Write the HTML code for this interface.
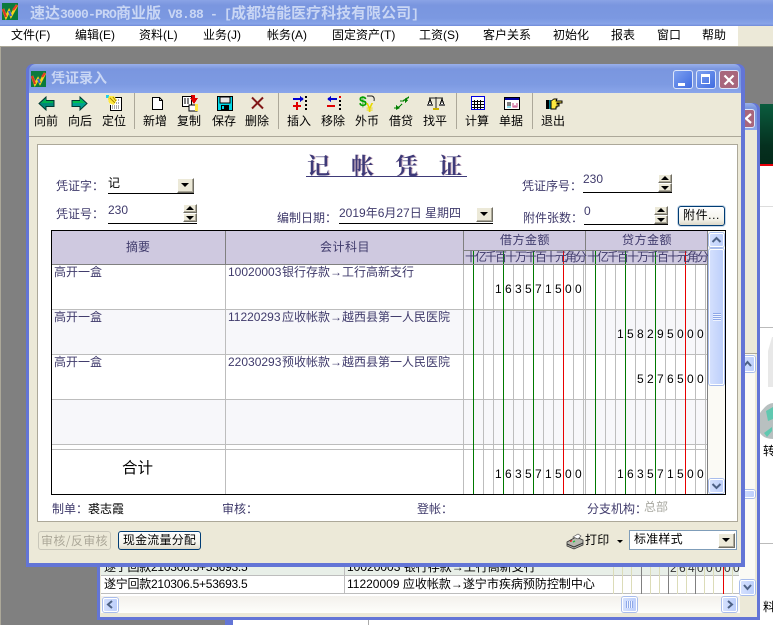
<!DOCTYPE html>
<html><head><meta charset="utf-8"><title>速达3000-PRO商业版</title>
<style>
html,body{margin:0;padding:0;width:773px;height:625px;overflow:hidden;background:#808080}
body{position:relative;font:12px/14px "WenQuanYi Zen Hei","Noto Sans CJK SC","Liberation Sans",sans-serif;color:#000}
.a,.t,.l,svg{position:absolute}
.t,.l{white-space:nowrap;font:12px/14px "Liberation Sans","WenQuanYi Zen Hei","Noto Sans CJK SC",sans-serif}
.l{color:#3f3a6b}
.tb{color:#000;width:40px;text-align:center;top:114px}
.n{font:12px/14px "Liberation Sans",sans-serif;letter-spacing:3.33px;color:#000;position:absolute;white-space:nowrap}
.u{position:absolute;height:1px;background:#000}
.b{position:absolute;background:#ece9d8;border:1px solid;border-color:#fff #716f64 #716f64 #fff;box-shadow:inset -1px -1px 0 #aca899;box-sizing:border-box}
.b i{position:absolute;width:0;height:0;border-left:4px solid transparent;border-right:4px solid transparent}
.d{border-top:4px solid #000}
.up{border-bottom:4px solid #000}
.sb{position:absolute;background:linear-gradient(90deg,#d4e0fd,#bdcffc);border:1px solid #fff;box-shadow:0 0 0 1px #a9bdec;box-sizing:border-box;border-radius:2px}
.tbtn{position:absolute;top:70px;width:20px;height:19px;box-sizing:border-box;border:1px solid #dde6fa;border-radius:3px;background:linear-gradient(135deg,#7da0f0,#3f6be0)}
.xb{position:absolute;box-sizing:border-box;border:1px solid #003c74;border-radius:3px;background:linear-gradient(#fff,#f3f2ea 70%,#dcd8c8);text-align:center;font:12px/17px "Liberation Sans","WenQuanYi Zen Hei",sans-serif}
.m{font:13px/17px "Liberation Mono",monospace;letter-spacing:-.8px;font-weight:bold}
</style></head>
<body>

<!-- far right background -->
<div class="a" style="left:760px;top:104px;width:13px;height:60px;background:linear-gradient(#0a5c3e,#05301f 70%,#042a1a)"></div>
<div class="a" style="left:760px;top:164px;width:13px;height:2px;background:#e8000a"></div>
<div class="a" style="left:760px;top:166px;width:13px;height:459px;background:#fff"></div>
<div class="a" style="left:760px;top:206px;width:13px;height:1px;background:#ddd"></div>
<div class="a" style="left:760px;top:327px;width:13px;height:1px;background:#bbb"></div>
<div class="a" style="left:760px;top:543px;width:13px;height:1px;background:#bbb"></div>
<svg style="left:760px;top:335px" width="13" height="110" viewBox="0 0 13 110"><path d="M8 16L12 2L13 2V52H8z" fill="#e8e8e8"/><path d="M0 78Q7 68 13 68V104Q4 104 0 98z" fill="#b8c0c0"/><path d="M6 76L13 72V84L8 86zM4 98L12 92V96L7 102z" fill="#60c8b0"/></svg>
<div class="t" style="left:763px;top:444px;">转</div>
<div class="t" style="left:763px;top:600px;">料</div>

<!-- bottom window behind -->
<div class="a" style="left:225px;top:617px;width:8px;height:8px;background:#6375d6"></div>
<div class="a" style="left:233px;top:617px;width:540px;height:8px;background:#fff"></div>
<div class="a" style="left:368px;top:617px;width:1px;height:8px;background:#aaa"></div>

<!-- second window -->
<div class="a" style="left:97px;top:103px;width:663px;height:517px;background:#6375d6;border-radius:7px 7px 0 0"></div>
<div class="a" style="left:100px;top:103px;width:657px;height:27px;background:linear-gradient(#9ab0ea,#7a96df 5px,#7d9ae2 70%,#8aa6ea);border-radius:7px 7px 0 0"></div>
<div class="a" style="left:100px;top:130px;width:657px;height:487px;background:#ece9d8"></div>
<div class="a" style="left:735px;top:109px;width:20px;height:19px;box-sizing:border-box;border:1px solid #dde6fa;border-radius:3px;background:#a8667c"></div>
<svg style="left:745px;top:113px" width="10" height="11" viewBox="0 0 10 11"><path d="M6 1L1 5.5L6 10" fill="none" stroke="#fff" stroke-width="2.2"/></svg>
<div class="a" style="left:745px;top:353px;width:12px;height:1px;background:#aca899"></div>
<div class="a" style="left:101px;top:354px;width:654px;height:243px;background:#fff"></div>
<div class="a" style="left:101px;top:562px;width:638px;height:13px;background:#e8efe8"></div>
<div class="a" style="left:101px;top:575px;width:638px;height:1px;background:#bdbdbd"></div>
<div class="a" style="left:101px;top:593px;width:638px;height:1px;background:#bdbdbd"></div>
<div class="a" style="left:344px;top:562px;width:1px;height:32px;background:#bdbdbd"></div>
<svg style="left:0;top:0" width="773" height="625" shape-rendering="crispEdges"><path d="M613.5 562V594M622.5 562V594M631.5 562V594M650.5 562V594M659.5 562V594M677.5 562V594M686.5 562V594M704.5 562V594M713.5 562V594M732.5 562V594" stroke="#dcdcb8"/><path d="M641.5 562V594M668.5 562V594M695.5 562V594" stroke="#808080"/><path d="M723.5 562V594" stroke="#e80000"/></svg>
<div class="t" style="left:104px;top:560px;letter-spacing:-.25px">遂宁回款210306.5+53693.5</div>
<div class="t" style="left:347px;top:560px;">10020003 银行存款<b>→</b>工行高新支行</div>
<div class="n" style="left:670px;top:561px;letter-spacing:2.33px;color:#333">264000000</div>
<div class="t" style="left:104px;top:577px;letter-spacing:-.25px">遂宁回款210306.5+53693.5</div>
<div class="t" style="left:347px;top:577px;">11220009 应收帐款<b>→</b>遂宁市疾病预防控制中心</div>
<!-- its vertical scrollbar -->
<div class="a" style="left:740px;top:354px;width:15px;height:243px;background:#fbfaf5"></div>
<div class="sb" style="left:740px;top:356px;width:15px;height:16px"></div>
<svg style="left:741px;top:359px" width="13" height="10" viewBox="0 0 13 10"><path d="M3 7L6.500 3L10 7" fill="none" stroke="#4d6185" stroke-width="2"/></svg>
<div class="sb" style="left:740px;top:490px;width:15px;height:8px"></div>
<div class="sb" style="left:740px;top:580px;width:15px;height:15px"></div>
<svg style="left:741px;top:583px" width="13" height="10" viewBox="0 0 13 10"><path d="M3 2L6.5 6L10 2" fill="none" stroke="#4d6185" stroke-width="2"/></svg>
<!-- its h scrollbar -->
<div class="a" style="left:101px;top:596px;width:639px;height:17px;background:linear-gradient(#f3f1ec,#fefefb)"></div>
<div class="a" style="left:740px;top:596px;width:17px;height:17px;background:#ece9d8"></div>
<div class="sb" style="left:103px;top:598px;width:15px;height:14px"></div>
<svg style="left:105px;top:599px" width="10" height="11" viewBox="0 0 10 11"><path d="M7 2L3 5.500L7 9" fill="none" stroke="#4d6185" stroke-width="2"/></svg>
<div class="sb" style="left:622px;top:597px;width:15px;height:15px"></div>
<div class="a" style="left:626px;top:601px;width:7px;height:7px;background:repeating-linear-gradient(90deg,#8ea8e8 0 1px,#eef3ff 1px 2px)"></div>
<div class="sb" style="left:722px;top:597px;width:15px;height:15px"></div>
<svg style="left:725px;top:599px" width="10" height="11" viewBox="0 0 10 11"><path d="M3 2L7 5.5L3 9" fill="none" stroke="#4d6185" stroke-width="2"/></svg>

<!-- main window title and menu -->
<div class="a" style="left:0;top:0;width:773px;height:26px;background:linear-gradient(#8aa3e6,#7a96df 5px,#7b98e1 70%,#88a4e8 92%,#6f8ad8)"></div>
<svg style="left:1px;top:2px" width="18" height="20" viewBox="0 0 18 20"><rect x="1" y="1" width="16" height="17" fill="#0b7a3c"/><path d="M2 7L5 15L8 9L10 14L16 3" fill="none" stroke="#f7d21a" stroke-width="2.6"/><path d="M2 7L5 15" stroke="#d8342a" stroke-width="2.2"/><path d="M12 8L16 3" stroke="#e83a28" stroke-width="2.2"/><path d="M8 9L10 14" stroke="#3a5fd0" stroke-width="2.2"/></svg>
<div class="a" style="left:30px;top:4px;white-space:nowrap;font:bold 15px/17px 'WenQuanYi Zen Hei','Noto Sans CJK SC',sans-serif;color:#c9d6f4">速达<span class="m">3000-PRO</span>商业版<span class="m"> V8.88 - [</span>成都培能医疗科技有限公司<span class="m">]</span></div>

<div class="a" style="left:0;top:26px;width:773px;height:20px;background:#ece9d8"></div>
<div class="a" style="left:0;top:26px;width:738px;height:20px;background:#fff"></div>
<div class="a" style="left:0;top:46px;width:773px;height:1px;background:#aca899"></div>
<div class="t" style="left:11px;top:28px">文件(F)</div>
<div class="t" style="left:75px;top:28px">编辑(E)</div>
<div class="t" style="left:139px;top:28px">资料(L)</div>
<div class="t" style="left:203px;top:28px">业务(J)</div>
<div class="t" style="left:267px;top:28px">帐务(A)</div>
<div class="t" style="left:332px;top:28px">固定资产(T)</div>
<div class="t" style="left:419px;top:28px">工资(S)</div>
<div class="t" style="left:483px;top:28px">客户关系</div>
<div class="t" style="left:553px;top:28px">初始化</div>
<div class="t" style="left:611px;top:28px">报表</div>
<div class="t" style="left:657px;top:28px">窗口</div>
<div class="t" style="left:702px;top:28px">帮助</div>
<div class="a" style="left:0;top:47px;width:1px;height:578px;background:#aca899"></div>

<!-- dialog -->
<div class="a" style="left:26px;top:64px;width:719px;height:503px;background:#6375d6;border-radius:7px 7px 0 0"></div>
<div class="a" style="left:29px;top:64px;width:712px;height:29px;background:linear-gradient(#9ab0ea,#7a96df 5px,#7d9ae2 70%,#8aa6ea);border-radius:7px 7px 0 0"></div>
<div class="a" style="left:29px;top:93px;width:712px;height:470px;background:#ece9d8"></div>
<svg style="left:30px;top:70px" width="18" height="19" viewBox="0 0 18 19"><rect x="1" y="1" width="15" height="16" fill="#0b7a3c"/><path d="M2 6L5 14L8 9L10 13L15 3" fill="none" stroke="#f7d21a" stroke-width="2.6"/><path d="M2 6L5 14" stroke="#d8342a" stroke-width="2.2"/><path d="M12 7L15 3" stroke="#e83a28" stroke-width="2.2"/><path d="M8 9L10 13" stroke="#3a5fd0" stroke-width="2.2"/></svg>
<div class="a" style="left:51px;top:71px;font:bold 14px/15px 'WenQuanYi Zen Hei','Noto Sans CJK SC',sans-serif;color:#c9d6f4">凭证录入</div>
<div class="tbtn" style="left:673px"><div class="a" style="left:4px;top:12px;width:7px;height:3px;background:#fff"></div></div>
<div class="tbtn" style="left:696px"><div class="a" style="left:4px;top:3px;width:9px;height:10px;box-sizing:border-box;border:1px solid #fff;border-top-width:3px"></div></div>
<div class="tbtn" style="left:719px;background:#a8667c"><svg style="left:3px;top:3px" width="12" height="12" viewBox="0 0 12 12"><path d="M1.5 1.5L10.5 10.5M10.5 1.5L1.5 10.5" stroke="#fff" stroke-width="2.2"/></svg></div>

<!-- toolbar separators -->
<div class="a" style="left:134px;top:93px;width:1px;height:36px;background:#aca899"></div>
<div class="a" style="left:278px;top:93px;width:1px;height:36px;background:#aca899"></div>
<div class="a" style="left:456px;top:93px;width:1px;height:36px;background:#aca899"></div>
<div class="a" style="left:532px;top:93px;width:1px;height:36px;background:#aca899"></div>
<div class="a" style="left:29px;top:136px;width:712px;height:1px;background:#aca899"></div>

<!-- toolbar labels -->
<div class="t tb" style="left:26px">向前</div>
<div class="t tb" style="left:60px">向后</div>
<div class="t tb" style="left:94px">定位</div>
<div class="t tb" style="left:135px">新增</div>
<div class="t tb" style="left:169px">复制</div>
<div class="t tb" style="left:204px">保存</div>
<div class="t tb" style="left:237px">删除</div>
<div class="t tb" style="left:279px">插入</div>
<div class="t tb" style="left:313px">移除</div>
<div class="t tb" style="left:347px">外币</div>
<div class="t tb" style="left:381px">借贷</div>
<div class="t tb" style="left:415px">找平</div>
<div class="t tb" style="left:457px">计算</div>
<div class="t tb" style="left:491px">单据</div>
<div class="t tb" style="left:533px">退出</div>

<!-- toolbar icons -->
<svg style="left:38px;top:95px" width="17" height="17" viewBox="0 0 17 17"><path d="M1 8.5L8 2V5.5H16V11.5H8V15z" fill="#008878" stroke="#003830"/><path d="M3 8L8 3.5V6H15V8z" fill="#00b050"/></svg>
<svg style="left:71px;top:95px" width="17" height="17" viewBox="0 0 17 17"><path d="M16 8.5L9 2V5.5H1V11.5H9V15z" fill="#00a090" stroke="#003830"/><path d="M14 8L9 3.5V6H2V8z" fill="#00c050"/></svg>
<svg style="left:106px;top:95px" width="17" height="17" viewBox="0 0 17 17" shape-rendering="crispEdges"><path d="M2.5 2.5H15.5V15.5H4.5V10" fill="#fff" stroke="#000"/><path d="M6 11H14M6 13H14M10 8H14M10 5H14" stroke="#555" stroke-dasharray="1 1"/><rect x="0" y="0" width="3" height="3" fill="#20d0e8"/><path d="M3 1H8L11 5L8 10L3 8L2 4z" fill="#ffe840"/><path d="M4 3L9 8M7 2L10 6" stroke="#b09000"/></svg>
<svg style="left:151px;top:96px" width="13" height="15" viewBox="0 0 13 15" shape-rendering="crispEdges"><path d="M1.5 1.5H8.5L11.5 4.5V13.5H1.5z" fill="#fff" stroke="#000"/><path d="M8.5 1.5V4.5H11.5" fill="none" stroke="#000"/></svg>
<svg style="left:182px;top:95px" width="17" height="17" viewBox="0 0 17 17" shape-rendering="crispEdges"><path d="M0.5 1.5H9.5V11.5H0.5z" fill="#fff" stroke="#000"/><path d="M2 4H8M2 6H7M2 8H8" stroke="#000" stroke-dasharray="2 1"/><rect x="7" y="10" width="8" height="6" fill="#fff" stroke="#000"/><rect x="13" y="9" width="3" height="7" fill="#ffe840"/><path d="M8 0H12V3H15L11 9L7 3H9z" fill="#e00000" transform="translate(1 0)"/></svg>
<svg style="left:217px;top:96px" width="16" height="15" viewBox="0 0 16 15" shape-rendering="crispEdges"><rect x=".5" y=".5" width="15" height="14" fill="#00d8e8" stroke="#000"/><rect x="3" y="1" width="10" height="6" fill="#e8e8e8" stroke="#000" stroke-width=".6"/><rect x="4" y="9" width="8" height="5" fill="#000"/><rect x="5" y="10" width="2" height="3" fill="#00d8e8"/></svg>
<svg style="left:250px;top:96px" width="15" height="14" viewBox="0 0 15 14"><path d="M2 1.5L13 12.5M13 1.5L2 12.5" stroke="#801818" stroke-width="2"/></svg>
<svg style="left:292px;top:95px" width="16" height="16" viewBox="0 0 16 16" shape-rendering="crispEdges"><path d="M1 4H9" stroke="#0000d0" stroke-width="2"/><path d="M8 1L12 4L8 7z" fill="#0000d0"/><path d="M1 11H9M5 7V15" stroke="#e00000" stroke-width="2.4"/><path d="M14 1V3M14 5V7M14 9V11M14 13V15" stroke="#000" stroke-width="2"/></svg>
<svg style="left:326px;top:95px" width="16" height="16" viewBox="0 0 16 16" shape-rendering="crispEdges"><path d="M4 4H11" stroke="#0000d0" stroke-width="2"/><path d="M5 1L1 4L5 7z" fill="#0000d0"/><path d="M1 11H9" stroke="#e00000" stroke-width="2.4"/><path d="M14 1V3" stroke="#e00000" stroke-width="2"/><path d="M14 5V7M14 9V11M14 13V15" stroke="#000" stroke-width="2"/></svg>
<div class="a" style="left:359px;top:94px;font:bold 14px/15px 'Liberation Sans',sans-serif;color:#00a000">$</div>
<div class="a" style="left:366px;top:101px;font:bold 13px/13px 'Liberation Sans',sans-serif;color:#e8d800">¥</div>
<svg style="left:366px;top:95px" width="10" height="10" viewBox="0 0 10 10"><path d="M1 1H6Q9 2 8 6M5 7" fill="none" stroke="#222"/></svg>
<svg style="left:393px;top:96px" width="18" height="15" viewBox="0 0 18 15" shape-rendering="crispEdges"><path d="M16 1L10 5H7M1 12H5L9 8" fill="none" stroke="#008000" stroke-width="1.4"/><path d="M3 9L7 12L3 14zM12 2L15 4L12 7z" fill="#008000"/></svg>
<svg style="left:427px;top:96px" width="18" height="15" viewBox="0 0 18 15" shape-rendering="crispEdges"><path d="M2 2H16M9 1V12" stroke="#222" stroke-width="1.2"/><path d="M1 9L3 3L5 9z" fill="#fff" stroke="#000"/><path d="M13 9L15 3L17 9z" fill="#fff" stroke="#000"/><rect x="0" y="8" width="6" height="2" fill="#666"/><rect x="12" y="8" width="6" height="2" fill="#666"/><rect x="6" y="12" width="6" height="2" fill="#c8b000"/></svg>
<svg style="left:471px;top:96px" width="15" height="14" viewBox="0 0 15 14" shape-rendering="crispEdges"><rect x=".5" y=".5" width="13" height="13" fill="#fff" stroke="#0000e0"/><path d="M1 5.5H13M1 8.5H13M1 11.5H13M3.5 4V13M6.5 4V13M9.5 4V13" stroke="#000"/></svg>
<svg style="left:504px;top:97px" width="16" height="13" viewBox="0 0 16 13" shape-rendering="crispEdges"><rect x=".5" y=".5" width="15" height="12" fill="#fff" stroke="#000"/><rect x="1" y="1" width="14" height="2" fill="#0000a0"/><path d="M3 6H7M3 8H7" stroke="#000" /><path d="M3 10H7" stroke="#20c0e0"/><path d="M9 6V10H13V6M11 8V10" fill="none" stroke="#c04080"/></svg>
<svg style="left:545px;top:98px" width="18" height="12" viewBox="0 0 18 12" shape-rendering="crispEdges"><rect x="1" y="2" width="3" height="9" fill="#000"/><rect x="4" y="2" width="2" height="9" fill="#008090"/><path d="M6 3L9 1H12L11 3H17V5H12V6H14V8H12V9H11V11H6z" fill="#ffe840" stroke="#000" stroke-width=".8"/></svg>

<!-- white panel -->
<div class="a" style="left:37px;top:144px;width:701px;height:378px;box-sizing:border-box;background:#fff;border:1px solid #aca899"></div>

<div class="a" style="left:307px;top:150px;white-space:nowrap;font:bold 23px/30px 'Noto Serif CJK SC',serif;letter-spacing:21px;color:#3e3a78;text-shadow:1px 0 0 rgba(150,60,90,.35)">记帐凭证</div>
<div class="u" style="left:306px;top:176px;width:161px;background:#3e3a78"></div>

<div class="l" style="left:56px;top:179px">凭证字：</div>
<div class="t" style="left:108px;top:176px">记</div>
<div class="u" style="left:108px;top:193px;width:86px"></div>
<div class="b" style="left:177px;top:178px;width:17px;height:15px"><i class="d" style="left:3px;top:4px"></i></div>

<div class="l" style="left:56px;top:207px">凭证号：</div>
<div class="l" style="left:108px;top:203px">230</div>
<div class="u" style="left:108px;top:223px;width:89px"></div>
<div class="b" style="left:183px;top:204px;width:14px;height:9px"><i class="up" style="left:2px;top:1px"></i></div>
<div class="b" style="left:183px;top:213px;width:14px;height:9px"><i class="d" style="left:2px;top:2px"></i></div>

<div class="l" style="left:277px;top:211px">编制日期：</div>
<div class="l" style="left:339px;top:206px">2019年6月27日 星期四</div>
<div class="u" style="left:339px;top:223px;width:154px"></div>
<div class="b" style="left:476px;top:207px;width:17px;height:15px"><i class="d" style="left:3px;top:4px"></i></div>

<div class="l" style="left:522px;top:179px">凭证序号：</div>
<div class="l" style="left:583px;top:172px">230</div>
<div class="u" style="left:583px;top:192px;width:89px"></div>
<div class="b" style="left:658px;top:174px;width:14px;height:9px"><i class="up" style="left:2px;top:1px"></i></div>
<div class="b" style="left:658px;top:183px;width:14px;height:9px"><i class="d" style="left:2px;top:2px"></i></div>

<div class="l" style="left:523px;top:211px">附件张数：</div>
<div class="l" style="left:584px;top:204px">0</div>
<div class="u" style="left:584px;top:224px;width:84px"></div>
<div class="b" style="left:654px;top:206px;width:14px;height:9px"><i class="up" style="left:2px;top:1px"></i></div>
<div class="b" style="left:654px;top:215px;width:14px;height:9px"><i class="d" style="left:2px;top:2px"></i></div>
<div class="xb" style="left:678px;top:206px;width:47px;height:20px;letter-spacing:.6px;box-shadow:0 0 0 1px #c8d8e8">附件...</div>

<!-- table -->
<div class="a" style="left:51px;top:230px;width:675px;height:265px;box-sizing:border-box;background:#fff;border:1px solid #000"></div>
<div class="a" style="left:52px;top:231px;width:655px;height:33px;background:#cfc9e0"></div>
<div class="a" style="left:52px;top:310px;width:655px;height:44px;background:#f7f7fa"></div>
<div class="a" style="left:52px;top:400px;width:655px;height:44px;background:#f7f7fa"></div>
<svg style="left:0;top:0" width="773" height="625" shape-rendering="crispEdges">
<path d="M225.500 264V494M463.500 264V494M483.500 264V494M493.500 264V494M513.500 264V494M523.500 264V494M543.500 264V494M553.500 264V494M573.500 264V494M583.500 264V494M585.500 264V494M605.500 264V494M615.500 264V494M635.500 264V494M645.500 264V494M665.500 264V494M675.500 264V494M695.500 264V494M705.500 264V494M52 309.500H707M52 354.500H707M52 399.500H707M52 444.500H707M52 449.500H707" stroke="#bdbdbd" fill="none"/>
<path d="M473.500 250V494M503.500 250V494M533.500 250V494M595.500 250V494M625.500 250V494M655.500 250V494" stroke="#007800" fill="none"/>
<path d="M563.500 250V494M685.500 250V494" stroke="#e80000" fill="none"/>
<path d="M225.500 231V264M463.500 231V264M585.500 231V264M463 250.500H707M52 264.500H707M707.500 231V494" stroke="#808080" fill="none"/>
</svg>
<div class="l" style="left:126px;top:240px">摘要</div>
<div class="l" style="left:320px;top:240px;letter-spacing:.5px">会计科目</div>
<div class="l" style="left:500px;top:233px;letter-spacing:.5px">借方金额</div>
<div class="l" style="left:622px;top:233px;letter-spacing:.5px">贷方金额</div>
<div class="l" style="left:465px;top:250px;letter-spacing:-2px">十亿千百十万千百十元角分</div>
<div class="l" style="left:587px;top:250px;letter-spacing:-2px">十亿千百十万千百十元角分</div>

<div class="l" style="left:54px;top:265px">高开一盒</div>
<div class="l" style="left:228px;top:265px">10020003</div><div class="l" style="left:282px;top:265px">银行存款<b>→</b>工行高新支行</div>
<div class="l" style="left:54px;top:310px">高开一盒</div>
<div class="l" style="left:228px;top:310px">11220293</div><div class="l" style="left:282px;top:310px">应收帐款<b>→</b>越西县第一人民医院</div>
<div class="l" style="left:54px;top:355px">高开一盒</div>
<div class="l" style="left:228px;top:355px">22030293</div><div class="l" style="left:282px;top:355px">预收帐款<b>→</b>越西县第一人民医院</div>
<div class="t" style="left:122px;top:461px;font-size:15.500px;line-height:16px">合计</div>

<div class="n" style="left:495px;top:282px">163571500</div>
<div class="n" style="left:617px;top:327px">158295000</div>
<div class="n" style="left:637px;top:372px">5276500</div>
<div class="n" style="left:495px;top:467px">163571500</div>
<div class="n" style="left:617px;top:467px">163571500</div>

<!-- table scrollbar -->
<div class="a" style="left:708px;top:231px;width:17px;height:263px;background:#fbfaf5"></div>
<div class="sb" style="left:709px;top:233px;width:15px;height:14px"></div>
<svg style="left:709px;top:235px" width="15" height="10" viewBox="0 0 14 10"><path d="M3 7L7 3L11 7" fill="none" stroke="#4d6185" stroke-width="2"/></svg>
<div class="sb" style="left:709px;top:249px;width:15px;height:136px"></div>
<div class="a" style="left:713px;top:313px;width:8px;height:8px;background:repeating-linear-gradient(#8ea8e8 0 1px,#eef3ff 1px 2px)"></div>
<div class="sb" style="left:709px;top:479px;width:15px;height:14px"></div>
<svg style="left:709px;top:481px" width="15" height="10" viewBox="0 0 14 10"><path d="M3 3L7 7L11 3" fill="none" stroke="#4d6185" stroke-width="2"/></svg>

<!-- footer -->
<div class="l" style="left:52px;top:502px">制单：</div>
<div class="t" style="left:88px;top:502px">裘志霞</div>
<div class="l" style="left:222px;top:502px">审核：</div>
<div class="l" style="left:417px;top:502px">登帐：</div>
<div class="l" style="left:587px;top:502px">分支机构：</div>
<div class="t" style="left:644px;top:500px;color:#a8a8a0">总部</div>

<div class="a" style="left:38px;top:531px;width:73px;height:19px;box-sizing:border-box;border:1px solid #c9c7ba;border-radius:3px;text-align:center;line-height:17px;color:#aca899;letter-spacing:.4px">审核/反审核</div>
<div class="xb" style="left:118px;top:531px;width:83px;height:19px;letter-spacing:.2px">现金流量分配</div>

<svg style="left:566px;top:532px" width="18" height="18" viewBox="0 0 18 18"><path d="M1 10L10 5L17 8V13L8 17L1 14z" fill="#b8b8b0" stroke="#333" stroke-width=".8"/><path d="M1 12L8 15L17 11" fill="none" stroke="#333" stroke-width="1"/><path d="M7 5L12 2L15 4L12 7z" fill="#fff" stroke="#555" stroke-width=".7"/><path d="M4 9.500L6 8.500" stroke="#e02020" stroke-width="1.400"/><path d="M7 10L9 9" stroke="#20c040" stroke-width="1.400"/></svg>
<div class="t" style="left:585px;top:533px;letter-spacing:.2px">打印</div>
<div class="a" style="left:617px;top:540px;width:0;height:0;border-left:3px solid transparent;border-right:3px solid transparent;border-top:3px solid #000"></div>
<div class="a" style="left:629px;top:530px;width:108px;height:20px;box-sizing:border-box;background:#fff;border:1px solid #7f9db9"></div>
<div class="t" style="left:634px;top:532px;letter-spacing:.2px">标准样式</div>
<div class="b" style="left:718px;top:533px;width:17px;height:15px"><i class="d" style="left:3px;top:4px"></i></div>
</body></html>
